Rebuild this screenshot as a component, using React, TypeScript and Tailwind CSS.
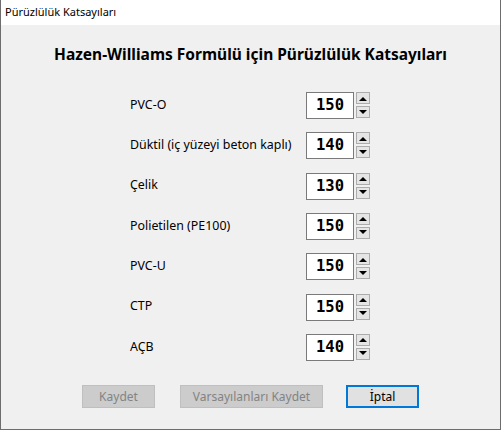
import React from 'react';

const rows = [
  { label: 'PVC-O', value: '150' },
  { label: 'Düktil (iç yüzeyi beton kaplı)', value: '140' },
  { label: 'Çelik', value: '130' },
  { label: 'Polietilen (PE100)', value: '150' },
  { label: 'PVC-U', value: '150' },
  { label: 'CTP', value: '150' },
  { label: 'AÇB', value: '140' },
];

const Spinner: React.FC = () => (
  <div className="ml-[2px] flex flex-col gap-[2px]">
    <div className="flex h-[12px] w-[14px] items-center justify-center border border-[#acacac] bg-[#e5e5e5]">
      <svg width="8" height="5" viewBox="0 0 8 5">
        <path d="M0 5 L4 1 L8 5 Z" fill="#000" />
      </svg>
    </div>
    <div className="flex h-[12px] w-[14px] items-center justify-center border border-[#acacac] bg-[#e5e5e5]">
      <svg width="8" height="5" viewBox="0 0 8 5">
        <path d="M0 0 L8 0 L4 4 Z" fill="#000" />
      </svg>
    </div>
  </div>
);

export default function App() {
  return (
    <div
      className="flex h-[430px] w-[501px] flex-col border-x border-b border-[#6d6d6d] bg-[#f0f0f0] text-black"
      style={{ fontFamily: '"Noto Sans", "Open Sans", sans-serif' }}
    >
      {/* title bar */}
      <div className="flex h-[25px] items-center bg-white pl-[4px] text-[11px]">
        Pürüzlülük Katsayıları
      </div>

      <div className="mt-[19px] text-center text-[15.5px] font-bold leading-[20px]">
        Hazen-Williams Formülü için Pürüzlülük Katsayıları
      </div>

      <div className="mt-[28px] flex flex-col pl-[129px]">
        {rows.map((r) => (
          <div key={r.label} className="flex h-[40.33px] items-start">
            <div className="flex h-[26px] w-[176px] items-center text-[12.4px]">{r.label}</div>
            <div
              className="flex h-[27px] w-[48px] items-center justify-center border border-[#7a7a7a] bg-white text-[15.5px] font-bold"
              style={{ fontFamily: '"DejaVu Sans Mono", "Liberation Mono", monospace' }}
            >
              {r.value}
            </div>
            <Spinner />
          </div>
        ))}
      </div>

      <div className="mt-[11px] flex items-start pl-[81px] text-[12px]">
        <button className="h-[23px] w-[73px] border border-[#bfbfbf] bg-[#cccccc] text-[#838383]">
          Kaydet
        </button>
        <button className="ml-[25px] h-[23px] w-[143px] border border-[#bfbfbf] bg-[#cccccc] text-[#838383]">
          Varsayılanları Kaydet
        </button>
        <button className="ml-[23px] h-[23px] w-[73px] border-2 border-[#0078d7] bg-[#e1e1e1]">
          İptal
        </button>
      </div>
    </div>
  );
}
